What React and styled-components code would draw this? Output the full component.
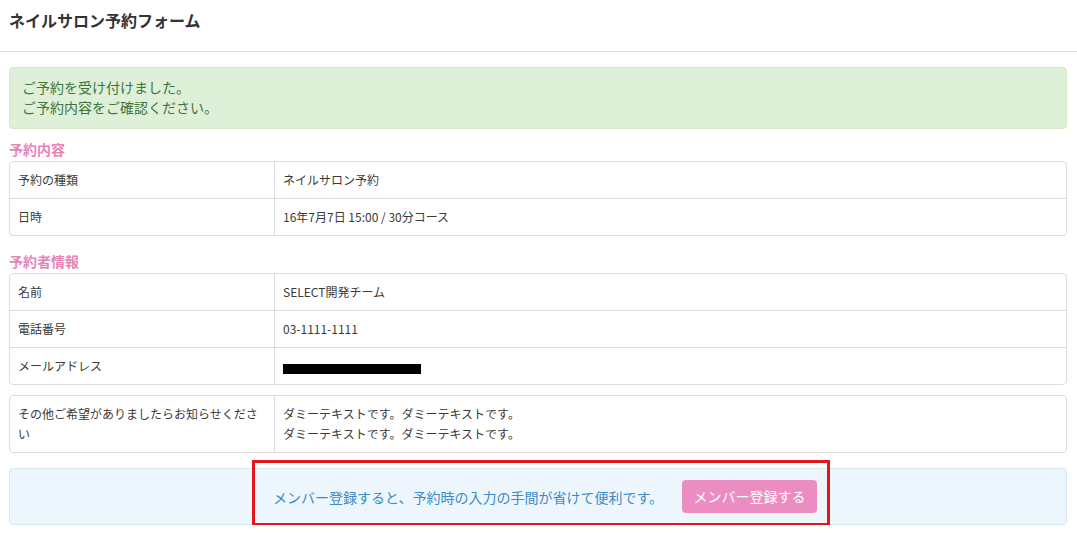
import React from "react";
import styled, { createGlobalStyle } from "styled-components";

const Global = createGlobalStyle`
  html, body { margin: 0; padding: 0; background: #fff; }
  body {
    font-family: "Noto Sans CJK JP", "Noto Sans", sans-serif;
    color: #333;
    -webkit-font-smoothing: antialiased;
  }
  * { box-sizing: border-box; }
`;

const Page = styled.div`
  position: relative;
  width: 1077px;
`;

const Header = styled.header`
  height: 52px;
  border-bottom: 1px solid #dedede;
  padding: 9px 9px 0;
`;

const Title = styled.h1`
  margin: 0;
  font-size: 16px;
  line-height: 22px;
  font-weight: bold;
  color: #333;
`;

const Body = styled.main`
  margin: 0 10px 0 9px;
  padding-top: 15px;
`;

const Alert = styled.div`
  background: #dff0d8;
  border: 1px solid #d6e9c6;
  border-radius: 4px;
  color: #3c763d;
  font-size: 14px;
  line-height: 20px;
  padding: 9px 12px 11px;
`;

const SectionTitle = styled.h2`
  margin: ${(p) => p.$top}px 0 2px;
  font-size: 14px;
  line-height: 20px;
  font-weight: bold;
  color: #e685b9;
`;

const Table = styled.div`
  display: grid;
  grid-template-columns: 264px 1fr;
  border: 1px solid #dddddd;
  border-radius: 4px;
  margin-top: ${(p) => p.$top || 0}px;
  font-size: 12px;
  line-height: 20px;
  color: #3a3a3a;
`;

const Cell = styled.div`
  padding: 8px;
  border-top: ${(p) => (p.$first ? "none" : "1px solid #dddddd")};
  border-left: ${(p) => (p.$value ? "1px solid #dddddd" : "none")};
`;

const Redacted = styled.span`
  display: inline-block;
  width: 138px;
  height: 10px;
  background: #000;
  vertical-align: middle;
  margin-top: 2px;
`;

const Info = styled.div`
  margin-top: 15px;
  background: #eef6fd;
  border: 1px solid #d7e8f5;
  border-radius: 4px;
  padding: 11px 0 11px 14px;
  display: flex;
  align-items: center;
  justify-content: center;
  gap: 19px;
`;

const InfoText = styled.span`
  font-size: 14px;
  line-height: 20px;
  color: #3a8bc6;
`;

const Button = styled.button`
  height: 33px;
  width: 135px;
  padding: 0;
  border: none;
  border-radius: 4px;
  background: #ec8dc1;
  color: #fff;
  font-family: inherit;
  font-size: 14px;
  line-height: 33px;
  cursor: pointer;
`;

const Highlight = styled.div`
  position: absolute;
  left: 252px;
  top: 460px;
  width: 578px;
  height: 66px;
  border: 3px solid #e2151b;
  pointer-events: none;
`;

function Rows({ rows }) {
  return rows.map(([label, value], i) => (
    <React.Fragment key={i}>
      <Cell $first={i === 0}>{label}</Cell>
      <Cell $first={i === 0} $value>
        {value}
      </Cell>
    </React.Fragment>
  ));
}

export default function App() {
  return (
    <Page>
      <Global />
      <Header>
        <Title>ネイルサロン予約フォーム</Title>
      </Header>
      <Body>
        <Alert>
          ご予約を受け付けました。
          <br />
          ご予約内容をご確認ください。
        </Alert>

        <SectionTitle $top={10}>予約内容</SectionTitle>
        <Table>
          <Rows
            rows={[
              ["予約の種類", "ネイルサロン予約"],
              ["日時", "16年7月7日 15:00 / 30分コース"],
            ]}
          />
        </Table>

        <SectionTitle $top={15}>予約者情報</SectionTitle>
        <Table>
          <Rows
            rows={[
              ["名前", "SELECT開発チーム"],
              ["電話番号", "03-1111-1111"],
              ["メールアドレス", <Redacted key="r" />],
            ]}
          />
        </Table>

        <Table $top={10}>
          <Rows
            rows={[
              [
                "その他ご希望がありましたらお知らせください",
                <>
                  ダミーテキストです。ダミーテキストです。
                  <br />
                  ダミーテキストです。ダミーテキストです。
                </>,
              ],
            ]}
          />
        </Table>

        <Info>
          <InfoText>メンバー登録すると、予約時の入力の手間が省けて便利です。</InfoText>
          <Button>メンバー登録する</Button>
        </Info>
      </Body>
      <Highlight />
    </Page>
  );
}
